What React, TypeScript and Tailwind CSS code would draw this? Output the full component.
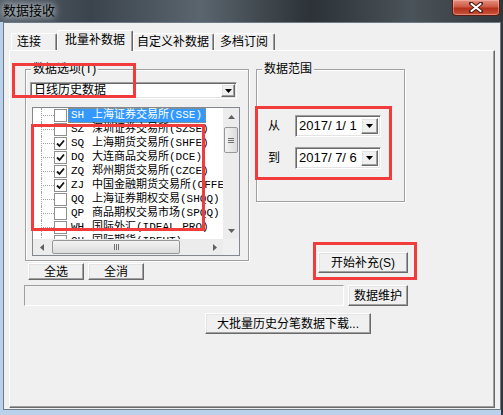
import React from "react";

const raised =
  "bg-[#f0f0f0] border border-t-white border-l-white border-r-[#696969] border-b-[#696969] shadow-[inset_-1px_-1px_0_#a0a0a0,inset_1px_1px_0_#e3e3e3]";
const sunken =
  "border border-t-[#a0a0a0] border-l-[#a0a0a0] border-r-white border-b-white shadow-[inset_1px_1px_0_#696969,inset_-1px_-1px_0_#e3e3e3]";

const markets = [
  { code: "SH", name: "上海证券交易所(SSE)", checked: false, selected: true },
  { code: "SZ", name: "深圳证券交易所(SZSE)", checked: false },
  { code: "SQ", name: "上海期货交易所(SHFE)", checked: true },
  { code: "DQ", name: "大连商品交易所(DCE)", checked: true },
  { code: "ZQ", name: "郑州期货交易所(CZCE)", checked: true },
  { code: "ZJ", name: "中国金融期货交易所(CFFEX)", checked: true },
  { code: "QQ", name: "上海证券期权交易(SHQQ)", checked: false },
  { code: "QP", name: "商品期权交易市场(SPQQ)", checked: false },
  { code: "WH", name: "国际外汇(IDEAL PRO)", checked: false },
  { code: "QH", name: "国际期货(IBFUT)", checked: false },
];

function Arrow({ dir, className = "" }: { dir: "up" | "down" | "left" | "right"; className?: string }) {
  const pts = {
    down: "0,0 7,0 3.5,4",
    up: "0,4 7,4 3.5,0",
    left: "4,0 4,7 0,3.5",
    right: "0,0 0,7 4,3.5",
  }[dir];
  const vertical = dir === "up" || dir === "down";
  return (
    <svg width={vertical ? 7 : 4} height={vertical ? 4 : 7} className={className}>
      <polygon points={pts} fill="currentColor" />
    </svg>
  );
}

function Btn({ children, className = "" }: { children: React.ReactNode; className?: string }) {
  return (
    <div className={`${raised} flex items-center justify-center text-[12px] leading-none text-black ${className}`}>
      {children}
    </div>
  );
}

function GroupBox({ label, className = "", children }: { label: string; className?: string; children?: React.ReactNode }) {
  return (
    <div className={`relative border border-[#a0a0a0] shadow-[inset_1px_1px_0_white,1px_1px_0_white] ${className}`}>
      <span className="absolute left-[5px] -top-[8px] px-[2px] bg-[#f0f0f0] text-[12px] leading-[14px]">{label}</span>
      {children}
    </div>
  );
}

function Check({ checked }: { checked: boolean }) {
  return (
    <span className="w-[13px] h-[13px] shrink-0 bg-white border border-[#8e8f8f] flex items-center justify-center">
      {checked && (
        <svg width="9" height="9" viewBox="0 0 9 9">
          <path d="M1 4.5 L3.5 7 L8 1.5" fill="none" stroke="#111" strokeWidth="1.8" />
        </svg>
      )}
    </span>
  );
}

function TreeRow({ code, name, checked, selected }: { code: string; name: string; checked: boolean; selected?: boolean }) {
  return (
    <div className="h-[14px] flex items-center">
      <span className="relative ml-[8px] w-[13px] h-full shrink-0">
        <span className="absolute left-0 top-0 bottom-0 border-l border-dotted border-[#a0a0a0]" />
        <span className="absolute left-0 right-0 top-[7px] border-t border-dotted border-[#a0a0a0]" />
      </span>
      <Check checked={checked} />
      <span
        className={`ml-px h-[15px] flex items-center pl-[2px] pr-[3px] whitespace-nowrap text-[11px] leading-[14px] font-['Liberation_Mono','Noto_Sans_CJK_SC',monospace] ${
          selected ? "bg-[#3399ff] text-white border border-dotted border-[#c08a3a]" : "text-black border border-transparent"
        }`}
      >
        <span className="w-[21px] shrink-0">{code}</span>
        {name}
      </span>
    </div>
  );
}

function DatePicker({ value }: { value: string }) {
  return (
    <div className={`${sunken} w-[86px] h-[22px] bg-white flex p-[2px]`}>
      <span className="flex-1 pl-px flex items-center text-[13px] whitespace-pre font-['Liberation_Sans',sans-serif]">{value}</span>
      <div className={`${raised} w-[17px] flex items-center justify-center`}>
        <Arrow dir="down" />
      </div>
    </div>
  );
}

export default function App() {
  return (
    <div className="w-[503px] h-[415px] overflow-hidden flex flex-col relative bg-[#b9d1ea] border-r-2 border-r-[#30363b] font-['Liberation_Sans','Noto_Sans_CJK_SC',sans-serif] text-black">
      {/* title bar */}
      <div className="h-[22px] shrink-0 flex items-start bg-[linear-gradient(to_right,#56606a_0%,#3b444c_18%,#5b656d_40%,#2c3237_62%,#4a5359_82%,#33393e_100%)]">
        <span className="pl-[3px] pt-[3px] text-[13px] leading-[15px] [text-shadow:0_0_6px_#d4dadf,0_0_10px_#d4dadf]">
          数据接收
        </span>
        <div className="ml-auto mr-px w-[48px] h-[16px] rounded-b-[4px] border border-t-0 border-[#5a1c12] bg-[linear-gradient(to_bottom,#e4907f_0%,#cf5a44_45%,#b5301b_55%,#c9543c_100%)] shadow-[inset_0_0_0_1px_rgba(255,200,190,0.45)] flex items-center justify-center">
          <svg width="14" height="11" viewBox="0 0 14 11">
            <path d="M2 1.5 L12 9.5 M12 1.5 L2 9.5" stroke="#4a1a12" strokeWidth="4" strokeLinecap="round" />
            <path d="M2.5 2 L11.5 9 M11.5 2 L2.5 9" stroke="#fff" strokeWidth="2.2" strokeLinecap="round" />
          </svg>
        </div>
      </div>

      {/* dialog body */}
      <div className="flex-1 ml-[3px] mb-[5px] bg-[#f0f0f0] border border-[#6d7b88] flex flex-col pl-[5px] pr-[5px] pt-[7px] pb-px">
        {/* tabs */}
        <div className="h-[20px] flex items-end pl-[2px] text-[12px] leading-none">
          <div className="w-[46px] h-[17px] border border-b-0 border-t-white border-l-white border-r-[#696969] shadow-[inset_-1px_0_0_#a0a0a0] rounded-t-[2px] pl-[5px] flex items-center">连接</div>
          <div className="relative z-10 -mb-px w-[76px] h-[21px] bg-[#f0f0f0] border border-b-0 border-t-white border-l-white border-r-[#696969] shadow-[inset_-1px_0_0_#a0a0a0] rounded-t-[2px] pl-[7px] pb-[3px] flex items-center">批量补数据</div>
          <div className="w-[81px] h-[17px] border border-b-0 border-t-white border-l-white border-r-[#696969] shadow-[inset_-1px_0_0_#a0a0a0] rounded-t-[2px] pl-[3px] flex items-center">自定义补数据</div>
          <div className="w-[61px] h-[17px] border border-b-0 border-t-white border-l-white border-r-[#696969] shadow-[inset_-1px_0_0_#a0a0a0] rounded-t-[2px] pl-[5px] flex items-center">多档订阅</div>
        </div>

        {/* tab panel */}
        <div className="flex-1 border border-t-white border-l-white border-r-[#696969] border-b-[#696969] shadow-[inset_-1px_-1px_0_#a0a0a0]">
          <div className="flex pl-[15px] pt-[18px]">
            {/* left column */}
            <div className="w-[224px] shrink-0">
              <GroupBox label="数据选项(T)" className="h-[192px]">
                <div className={`${sunken} mt-[12px] ml-[4px] w-[207px] h-[17px] bg-white flex p-px`}>
                  <span className="flex-1 pl-[2px] text-[12px] leading-[13px]">日线历史数据</span>
                  <div className={`${raised} w-[14px] flex items-center justify-center`}>
                    <Arrow dir="down" />
                  </div>
                </div>

                {/* tree list */}
                <div className="mt-[8px] ml-[6px] w-[208px] h-[149px] border border-[#828790] bg-white flex flex-col">
                  <div className="flex-1 flex min-h-0">
                    <div className="flex-1 overflow-hidden">
                      {markets.map((m) => (
                        <TreeRow key={m.code} {...m} />
                      ))}
                    </div>
                    <div className="w-[16px] bg-[#ececec] flex flex-col items-center">
                      <div className="h-[17px] flex items-center justify-center text-[#606060]">
                        <Arrow dir="up" />
                      </div>
                      <div className="mt-[2px] w-[14px] h-[26px] rounded-[2px] border border-[#979797] bg-[linear-gradient(to_right,#f3f3f3,#dcdcdc)] flex flex-col items-center justify-center gap-[1px]">
                        <span className="w-[6px] border-t border-[#707070]" />
                        <span className="w-[6px] border-t border-[#707070]" />
                        <span className="w-[6px] border-t border-[#707070]" />
                      </div>
                      <div className="flex-1" />
                      <div className="h-[17px] flex items-center justify-center text-[#606060]">
                        <Arrow dir="down" />
                      </div>
                    </div>
                  </div>
                  <div className="h-[16px] flex">
                    <div className="flex-1 bg-[#ececec] flex items-center">
                      <div className="w-[17px] flex justify-center text-[#606060]">
                        <Arrow dir="left" />
                      </div>
                      <div className="ml-[2px] w-[128px] h-[14px] rounded-[2px] border border-[#979797] bg-[linear-gradient(to_bottom,#f3f3f3,#dcdcdc)] flex items-center justify-center gap-[1px]">
                        <span className="h-[6px] border-l border-[#707070]" />
                        <span className="h-[6px] border-l border-[#707070]" />
                        <span className="h-[6px] border-l border-[#707070]" />
                      </div>
                      <div className="flex-1" />
                      <div className="w-[17px] flex justify-center text-[#606060]">
                        <Arrow dir="right" />
                      </div>
                    </div>
                    <div className="w-[16px] bg-[#f0f0f0]" />
                  </div>
                </div>
              </GroupBox>

              <div className="mt-[2px] pl-[3px] flex gap-[4px]">
                <Btn className="w-[56px] h-[17px]">全选</Btn>
                <Btn className="w-[56px] h-[17px]">全消</Btn>
              </div>
            </div>

            {/* right column */}
            <div className="ml-[7px] w-[150px]">
              <GroupBox label="数据范围" className="w-[149px] h-[133px]">
                <div className="mt-[45px] pl-[11px] flex items-center">
                  <span className="w-[27px] text-[12px]">从</span>
                  <DatePicker value="2017/ 1/ 1" />
                </div>
                <div className="mt-[10px] pl-[11px] flex items-center">
                  <span className="w-[27px] text-[12px]">到</span>
                  <DatePicker value="2017/ 7/ 6" />
                </div>
              </GroupBox>
              <Btn className="mt-[50px] ml-[62px] w-[90px] h-[21px]">开始补充(S)</Btn>
            </div>
          </div>

          <div className="mt-[5px] pl-[14px] flex gap-[4px]">
            <div className={`${sunken} w-[320px] h-[21px] bg-[#f0f0f0] shadow-none`} />
            <Btn className="w-[60px] h-[21px]">数据维护</Btn>
          </div>

          <div className="mt-[7px] pl-[195px]">
            <Btn className="w-[166px] h-[21px]">大批量历史分笔数据下载...</Btn>
          </div>
        </div>
      </div>

      {/* red annotation boxes */}
      <div className="absolute left-[12px] top-[63px] w-[124px] h-[35px] border-[3px] border-[#f23b3b]" />
      <div className="absolute left-[31px] top-[124px] w-[174px] h-[107px] border-[3px] border-[#f23b3b]" />
      <div className="absolute left-[255px] top-[106px] w-[137px] h-[74px] border-[3px] border-[#f23b3b]" />
      <div className="absolute left-[313px] top-[242px] w-[104px] h-[38px] border-[3px] border-[#f23b3b]" />
    </div>
  );
}
